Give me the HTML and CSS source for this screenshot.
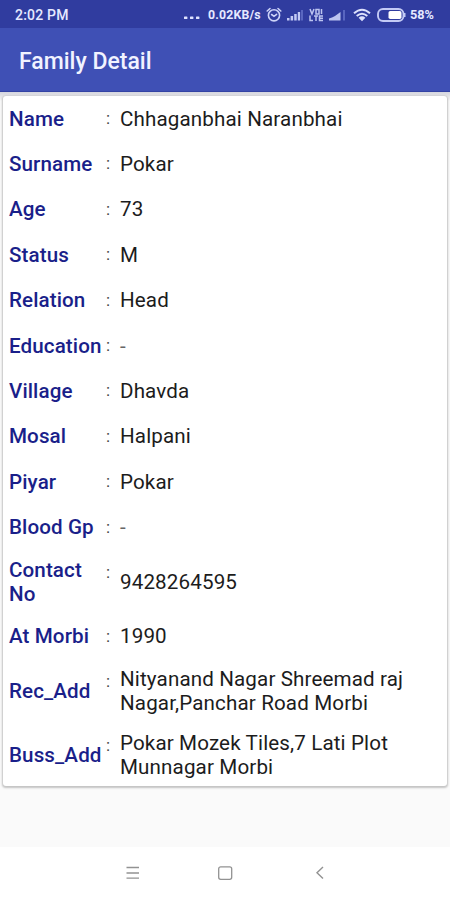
FILE: index.html
```html
<!DOCTYPE html>
<html lang="en">
<head>
<meta charset="utf-8">
<title>Family Detail</title>
<link rel="stylesheet" href="styles.css">
</head>
<body>
<div class="screen">
  <div class="status">
    <span class="time">2:02 PM</span>
    <svg class="dots" width="16" height="4" viewBox="0 0 16 4" fill="#dfe3ff"><rect x="0" y="0.5" width="3.4" height="2.6" rx="0.6"/><rect x="6" y="0.5" width="3.4" height="2.6" rx="0.6"/><rect x="12" y="0.5" width="3.4" height="2.6" rx="0.6"/></svg>
    <span class="speed">0.02KB/s</span>
    <svg class="alarm" width="16" height="16" viewBox="0 0 16 16" fill="none" stroke="#cdd3f8" stroke-width="1.6" stroke-linecap="round"><circle cx="8" cy="8.3" r="5.6"/><path d="M1.2 4 4 1.5M14.800 4 12 1.500M5.600 7.500 8 9.300l2.600-2"/></svg>
    <svg class="signal" width="17" height="12" viewBox="0 0 17 12" fill="#c3caf5"><rect x="0" y="9" width="2.5" height="2.5"/><rect x="3.6" y="7" width="2.5" height="4.5"/><rect x="7.2" y="5" width="2.5" height="6.5"/><rect x="10.8" y="3" width="2.3" height="8.5"/><rect x="14" y="1" width="2" height="10.5" fill="#5966c0"/></svg>
    <svg class="volte" width="15" height="14" viewBox="0 0 15 14" fill="none" stroke="#bcc4f0" stroke-width="1.5"><path d="M1 1l2 5 2-5M7 1.500h3V6H7zM12.500 1v5M1 7.500v5h3M5 8h4M7 8v5M14 8h-3.500v4.500H14M10.500 10.300H14"/></svg>
    <svg class="signal2" width="17" height="12" viewBox="0 0 17 12"><path fill="#bcc4f0" d="M0 11.500V9.500L3 8.500 6 7 11.500 3v8.500z"/><rect x="14" y="1" width="2" height="10.500" fill="#5966c0"/></svg>
    <svg class="wifi" width="18" height="14" viewBox="0 0 18 14" fill="none" stroke="#dde1fc" stroke-width="2"><path d="M1 5.200Q9-1.800 17 5.200M3.700 8Q9 3.400 14.300 8"/><path d="M5.600 9.700Q9 7 12.400 9.700L9 13.200z" fill="#dde1fc" stroke="none"/></svg>
    <svg class="battery" width="29" height="14" viewBox="0 0 29 14"><rect x="1" y="1" width="25.500" height="12" rx="5" fill="none" stroke="#c3caf5" stroke-width="1.900"/><rect x="11.500" y="3" width="13" height="8" rx="1.800" fill="#fff"/><rect x="27" y="5" width="1.500" height="4" fill="#c3caf5"/></svg>
    <span class="percent">58%</span>
  </div>
  <header class="appbar"><h1>Family Detail</h1></header>
  <main class="content">
    <section class="card">
      <div class="row"><b>Name</b><i>:</i><span>Chhaganbhai Naranbhai</span></div>
      <div class="row"><b>Surname</b><i>:</i><span>Pokar</span></div>
      <div class="row"><b>Age</b><i>:</i><span>73</span></div>
      <div class="row"><b>Status</b><i>:</i><span>M</span></div>
      <div class="row"><b>Relation</b><i>:</i><span>Head</span></div>
      <div class="row"><b>Education</b><i>:</i><span class="empty">-</span></div>
      <div class="row"><b>Village</b><i>:</i><span>Dhavda</span></div>
      <div class="row"><b>Mosal</b><i>:</i><span>Halpani</span></div>
      <div class="row"><b>Piyar</b><i>:</i><span>Pokar</span></div>
      <div class="row"><b>Blood Gp</b><i>:</i><span class="empty">-</span></div>
      <div class="row tall"><b>Contact<br>No</b><i>:</i><span>9428264595</span></div>
      <div class="row"><b>At Morbi</b><i>:</i><span>1990</span></div>
      <div class="row tall"><b>Rec_Add</b><i>:</i><span>Nityanand Nagar Shreemad raj<br>Nagar,Panchar Road Morbi</span></div>
      <div class="row tall"><b>Buss_Add</b><i>:</i><span>Pokar Mozek Tiles,7 Lati Plot<br>Munnagar Morbi</span></div>
    </section>
  </main>
  <nav class="navbar">
    <svg width="16" height="16" viewBox="0 0 16 16" fill="none" stroke="#929292" stroke-width="1.300"><path d="M1.500 2.500H14M1.500 8H14M1.500 13.200H14"/></svg>
    <svg width="16" height="16" viewBox="0 0 16 16" fill="none" stroke="#929292" stroke-width="1.300"><rect x="1.700" y="1.800" width="13" height="12.500" rx="2"/></svg>
    <svg width="16" height="16" viewBox="0 0 16 16" fill="none" stroke="#929292" stroke-width="1.400"><path d="M11 2 5 7.800l6 5.800"/></svg>
  </nav>
</div>
</body>
</html>
```
FILE: styles.css
```css
body {
  margin: 0;
  font-family: Roboto, "Liberation Sans", sans-serif;
}
.screen {
  width: 450px;
  height: 900px;
  display: flex;
  flex-direction: column;
  background: #fafafa;
  overflow: hidden;
}
.status {
  height: 28px;
  flex: none;
  box-sizing: border-box;
  padding: 1px 0 0 15px;
  display: flex;
  align-items: center;
  background: #303c9f;
  color: #e6e9ff;
  font-weight: 500;
  white-space: nowrap;
}
.status svg { flex: none; }
.time {
  width: 169px;
  font-size: 14px;
  letter-spacing: 0.2px;
}
.dots { margin: 6px 8px 0 0; }
.speed {
  width: 58px;
  font-size: 12.3px;
  font-weight: 700;
  letter-spacing: 0.2px;
}
.alarm { margin-right: 5px; }
.signal { margin-right: 5px; }
.volte { margin-right: 5px; }
.signal2 { margin-right: 7px; }
.wifi { margin-right: 6px; }
.battery { margin-right: 4px; }
.percent {
  font-size: 12.7px;
  font-weight: 700;
}
.appbar {
  height: 64px;
  flex: none;
  box-sizing: border-box;
  padding-left: 19px;
  display: flex;
  align-items: center;
  background: #3f50b5;
  border-bottom: 1px solid #3342a4;
}
.appbar h1 {
  margin: 4px 0 0;
  color: #f1f3ff;
  font-size: 23px;
  font-weight: 500;
}
.content {
  flex: 1;
  padding: 4px 3px 0;
  background: linear-gradient(#d5d6df, #e4e4e7 4px, #fafafa 9px);
}
.card {
  background: #fff;
  border-radius: 3px;
  box-shadow: 0 1px 2px 1px rgba(0, 0, 0, 0.22);
  height: 690px;
}
.row {
  height: 45.4px;
  padding-left: 6px;
  display: grid;
  grid-template-columns: 97px 14px 1fr;
  align-items: center;
  font-size: 20.6px;
  line-height: 24px;
  white-space: nowrap;
}
.tall { height: 63.7px; }
.row b {
  font-weight: 500;
  letter-spacing: 0.1px;
  color: #1a1f8a;
}
.row i {
  align-self: start;
  line-height: 45.4px;
  font-style: normal;
  font-size: 17px;
  color: #444;
}
.row span {
  letter-spacing: 0.13px;
  color: #1c1c1c;
}
.row .empty { color: #666; }
.navbar {
  height: 53px;
  flex: none;
  box-sizing: border-box;
  padding: 0 122px 1px 125px;
  display: grid;
  grid-template-columns: 92px 95px 16px;
  align-items: center;
  background: #fff;
}
```
